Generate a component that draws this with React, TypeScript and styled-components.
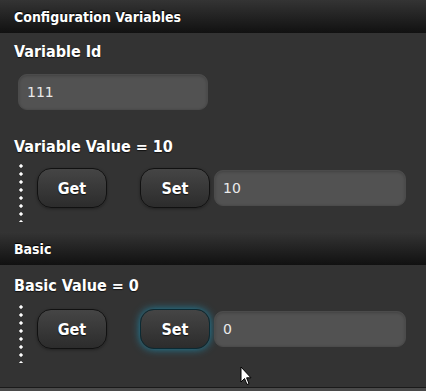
import React, { useState } from 'react';
import styled, { createGlobalStyle, css } from 'styled-components';

const GlobalStyle = createGlobalStyle`
  html, body {
    margin: 0;
    padding: 0;
    background: #333333;
  }
  body {
    font-family: "DejaVu Sans Condensed", "DejaVu Sans", sans-serif;
    color: #ffffff;
  }
`;

const Page = styled.div`
  position: relative;
  width: 426px;
  height: 391px;
  overflow: hidden;
  background: #333333;
`;

const SectionHeader = styled.h3`
  margin: 0;
  height: 33px;
  padding: 0 14px;
  display: flex;
  align-items: center;
  font-size: 14px;
  font-weight: bold;
  color: #ffffff;
  text-shadow: 0 -1px 1px #000;
  background: linear-gradient(#343434, #111111);
`;

const SectionBody = styled.div<{ $bottom: number }>`
  padding: 0 14px ${(p) => p.$bottom}px 14px;
`;

const FieldLabel = styled.div<{ $top: number }>`
  margin-top: ${(p) => p.$top}px;
  height: 20px;
  line-height: 20px;
  font-size: 16px;
  font-weight: bold;
  text-shadow: 0 1px 1px #111;
`;

const TextInput = styled.input<{ $width: number }>`
  box-sizing: border-box;
  display: block;
  width: ${(p) => p.$width}px;
  height: 36px;
  padding: 0 8px;
  border: 1px solid #4b4b4b;
  border-radius: 9px;
  background: #525252;
  box-shadow: inset 0 1px 3px rgba(0, 0, 0, 0.2);
  color: #eaeaea;
  font-family: "DejaVu Sans", sans-serif;
  font-size: 14px;
  outline: none;
`;

const IdInput = styled(TextInput)`
  margin: 12px 0 0 4px;
`;

const ActionRow = styled.div<{ $top: number }>`
  display: flex;
  align-items: flex-start;
  margin-top: ${(p) => p.$top}px;
`;

const Dots = styled.div`
  width: 4px;
  height: 60px;
  margin-left: 5px;
  background-image: radial-gradient(circle, #ffffff 1.4px, transparent 1.9px);
  background-size: 4px 8px;
  background-repeat: repeat-y;
`;

const Controls = styled.div`
  display: flex;
  align-items: center;
  margin-top: 6px;
  margin-left: 14px;
`;

const RoundButton = styled.button<{ $focused?: boolean }>`
  box-sizing: border-box;
  width: 70px;
  height: 40px;
  margin-right: 33px;
  border: 1px solid #111111;
  border-radius: 14px;
  background: linear-gradient(#454545, #2c2c2c);
  box-shadow: 0 1px 3px rgba(0, 0, 0, 0.35);
  color: #ffffff;
  font-family: "DejaVu Sans Condensed", "DejaVu Sans", sans-serif;
  font-size: 16px;
  font-weight: bold;
  text-shadow: 0 1px 1px #111;
  cursor: pointer;

  &:last-of-type {
    margin-right: 4px;
  }

  ${(p) =>
    p.$focused &&
    css`
      border-color: #0b2a33;
      box-shadow: 0 0 9px #1f86a6;
    `}
`;

const NextBar = styled.div`
  height: 7px;
  border-top: 1px solid #1a1a1a;
  background: #4a4a4a;
`;

const Pointer = styled.svg`
  position: absolute;
  left: 240px;
  top: 366px;
`;

const App: React.FC = () => {
  const [variableId, setVariableId] = useState('111');
  const [variableValue, setVariableValue] = useState('10');
  const [basicValue, setBasicValue] = useState('0');

  return (
    <Page>
      <GlobalStyle />
      <SectionHeader>Configuration Variables</SectionHeader>
      <SectionBody $bottom={10}>
        <FieldLabel $top={9}>Variable Id</FieldLabel>
        <IdInput $width={190} value={variableId} onChange={(e) => setVariableId(e.target.value)} />
        <FieldLabel $top={27}>Variable Value = {variableValue}</FieldLabel>
        <ActionRow $top={5}>
          <Dots />
          <Controls>
            <RoundButton>Get</RoundButton>
            <RoundButton>Set</RoundButton>
            <TextInput $width={192} value={variableValue} onChange={(e) => setVariableValue(e.target.value)} />
          </Controls>
        </ActionRow>
      </SectionBody>

      <SectionHeader>Basic</SectionHeader>
      <SectionBody $bottom={24}>
        <FieldLabel $top={11}>Basic Value = {basicValue}</FieldLabel>
        <ActionRow $top={7}>
          <Dots />
          <Controls>
            <RoundButton>Get</RoundButton>
            <RoundButton $focused>Set</RoundButton>
            <TextInput $width={192} value={basicValue} onChange={(e) => setBasicValue(e.target.value)} />
          </Controls>
        </ActionRow>
      </SectionBody>
      <NextBar />

      <Pointer width="12" height="20" viewBox="0 0 12 20">
        <path d="M1 1 L1 16 L4.5 12.5 L7 18.5 L9 17.6 L6.6 11.8 L11 11.8 Z" fill="#ffffff" stroke="#000000" strokeWidth="1" />
      </Pointer>
    </Page>
  );
};

export default App;
